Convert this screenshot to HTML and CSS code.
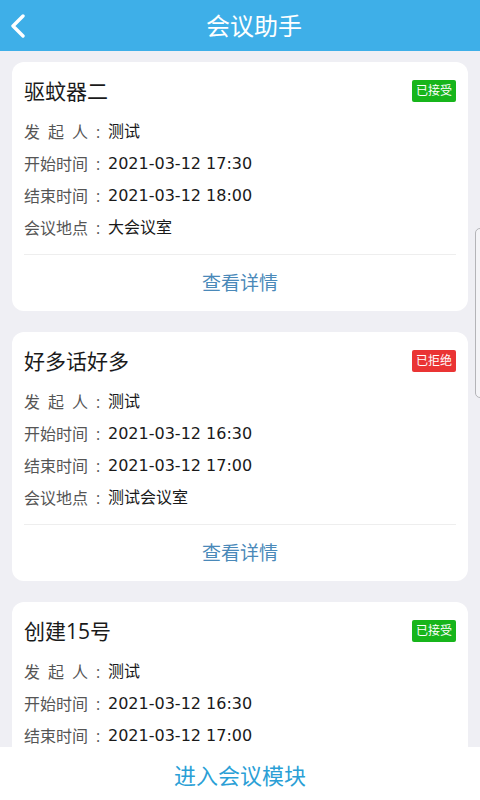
FILE: index.html
```html
<!DOCTYPE html>
<html lang="zh-CN">
<head>
  <meta charset="UTF-8">
  <title>会议助手</title>
  <meta name="viewport" content="width=device-width, initial-scale=1.0">
  <link rel="stylesheet" href="styles.css">
</head>
<body>

<div class="page">

  <!-- Top bar -->
  <div class="header">
    <span class="back">
      <svg width="16" height="24" viewBox="0 0 16 24"><path d="M13 2 L3 12 L13 22" fill="none" stroke="#fff" stroke-width="3.4" stroke-linecap="round" stroke-linejoin="round"/></svg>
    </span>
    <h1>会议助手</h1>
  </div>

  <!-- Meeting list -->
  <div class="list">

    <div class="card">
      <div class="card-head">
        <span class="title">驱蚊器二</span>
        <span class="badge accepted">已接受</span>
      </div>
      <div class="row"><span class="label">发起人</span><span class="colon">:</span><span class="value">测试</span></div>
      <div class="row"><span class="label">开始时间</span><span class="colon">:</span><span class="value">2021-03-12 17:30</span></div>
      <div class="row"><span class="label">结束时间</span><span class="colon">:</span><span class="value">2021-03-12 18:00</span></div>
      <div class="row"><span class="label">会议地点</span><span class="colon">:</span><span class="value">大会议室</span></div>
      <div class="detail">查看详情</div>
    </div>

    <div class="card">
      <div class="card-head">
        <span class="title">好多话好多</span>
        <span class="badge rejected">已拒绝</span>
      </div>
      <div class="row"><span class="label">发起人</span><span class="colon">:</span><span class="value">测试</span></div>
      <div class="row"><span class="label">开始时间</span><span class="colon">:</span><span class="value">2021-03-12 16:30</span></div>
      <div class="row"><span class="label">结束时间</span><span class="colon">:</span><span class="value">2021-03-12 17:00</span></div>
      <div class="row"><span class="label">会议地点</span><span class="colon">:</span><span class="value">测试会议室</span></div>
      <div class="detail">查看详情</div>
    </div>

    <div class="card">
      <div class="card-head">
        <span class="title">创建15号</span>
        <span class="badge accepted">已接受</span>
      </div>
      <div class="row"><span class="label">发起人</span><span class="colon">:</span><span class="value">测试</span></div>
      <div class="row"><span class="label">开始时间</span><span class="colon">:</span><span class="value">2021-03-12 16:30</span></div>
      <div class="row"><span class="label">结束时间</span><span class="colon">:</span><span class="value">2021-03-12 17:00</span></div>
      <div class="row"><span class="label">会议地点</span><span class="colon">:</span><span class="value">测试会议室</span></div>
      <div class="detail">查看详情</div>
    </div>

  </div>

  <div class="footer">进入会议模块</div>

  <div class="edge-handle"></div>
</div>

</body>
</html>
```

FILE: styles.css
```css
body {
  margin: 0;
  font-family: "Open Sans", "Noto Sans CJK SC", sans-serif;
  background-color: #efeff4;
}

.page {
  position: relative;
  height: 800px;
  display: flex;
  flex-direction: column;
  overflow: hidden;
}

.header {
  height: 51px;
  flex-shrink: 0;
  background-color: #3eafe8;
  display: flex;
  align-items: center;
  justify-content: center;
  padding-left: 28px;
  position: relative;
}

.header h1 {
  margin: 0;
  font-size: 24px;
  font-weight: normal;
  color: #fff;
  line-height: 51px;
}

.back {
  position: absolute;
  left: 10px;
  top: 14px;
  display: flex;
}

.list {
  flex: 1;
  overflow: hidden;
  padding: 11px 12px 0 12px;
  display: flex;
  flex-direction: column;
  gap: 21px;
}

.card {
  flex-shrink: 0;
  background-color: #fff;
  border-radius: 12px;
  padding: 13px 12px 0 12px;
}

.card-head {
  display: flex;
  justify-content: space-between;
  align-items: center;
  height: 30px;
  margin-bottom: 11px;
}

.title {
  font-size: 21px;
  color: #1a1a1a;
}

.badge {
  font-size: 12px;
  color: #fff;
  padding: 0 4px;
  height: 22px;
  line-height: 22px;
  border-radius: 2px;
  margin-top: 1px;
}

.accepted {
  background-color: #17b51b;
}

.rejected {
  background-color: #ea3434;
}

.row {
  display: flex;
  height: 32px;
  line-height: 32px;
  font-size: 16px;
}

.label {
  width: 64px;
  color: #555;
  text-align: justify;
  text-align-last: justify;
}

.colon {
  width: 20px;
  text-align: center;
  color: #555;
}

.value {
  font-family: "DejaVu Sans", "Noto Sans CJK SC", sans-serif;
  color: #1a1a1a;
}

.detail {
  margin-top: 10px;
  border-top: 1px solid #eeeeee;
  height: 56px;
  line-height: 56px;
  text-align: center;
  font-size: 19px;
  color: #4a89b9;
}

.footer {
  height: 53px;
  flex-shrink: 0;
  background-color: #fff;
  text-align: center;
  line-height: 56px;
  font-size: 22px;
  color: #2b9fd6;
}

.edge-handle {
  position: absolute;
  right: -6px;
  top: 228px;
  width: 9px;
  height: 168px;
  border: 1px solid #b4b4b8;
  border-radius: 5px;
  background-color: #f4f4f7;
}
```
